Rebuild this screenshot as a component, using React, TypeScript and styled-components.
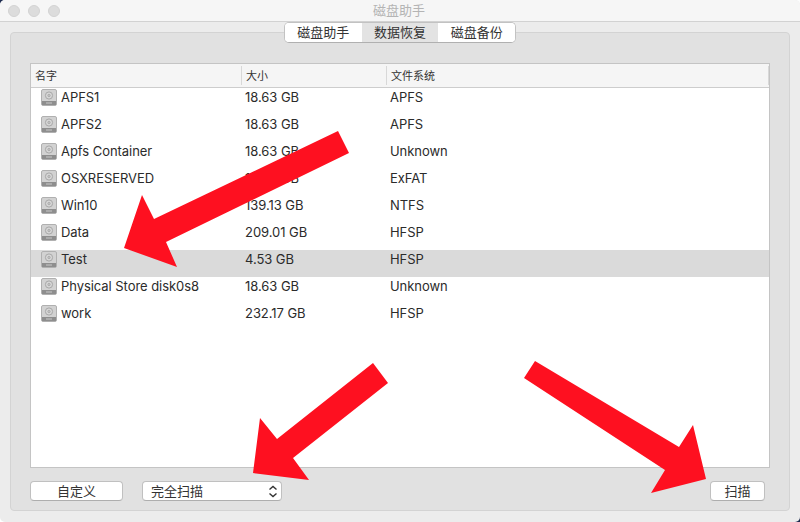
import styled, { createGlobalStyle } from "styled-components";

const rows = [
  { name: "APFS1", size: "18.63 GB", fs: "APFS" },
  { name: "APFS2", size: "18.63 GB", fs: "APFS" },
  { name: "Apfs Container", size: "18.63 GB", fs: "Unknown" },
  { name: "OSXRESERVED", size: "18.63 GB", fs: "ExFAT" },
  { name: "Win10", size: "139.13 GB", fs: "NTFS" },
  { name: "Data", size: "209.01 GB", fs: "HFSP" },
  { name: "Test", size: "4.53 GB", fs: "HFSP", selected: true },
  { name: "Physical Store disk0s8", size: "18.63 GB", fs: "Unknown" },
  { name: "work", size: "232.17 GB", fs: "HFSP" },
];

const arrows = [
  "338,131 349,153 166,242 177,267 124,248 142,195 154,219",
  "373,363 388,383 293,458 309,480 253,473 260,418 277,439",
  "535,361 524,378 665,470 651,493 706,479 693,425 679,447",
];

function DiskIcon() {
  return (
    <svg width="16" height="17" viewBox="0 0 16 17">
      <rect x="0.5" y="0.5" width="15" height="16" rx="1.5" fill="#d2d2d2" stroke="#b0b0b0" />
      <rect x="1" y="12" width="14" height="4" fill="#8e8e8e" />
      <circle cx="8" cy="6.5" r="3.6" fill="#d6d6d6" stroke="#a8a8a8" />
      <circle cx="8" cy="6.5" r="1.2" fill="#c4c4c4" stroke="#9c9c9c" strokeWidth="0.6" />
      <path d="M5 14h6" stroke="#c8c8c8" strokeWidth="1" />
    </svg>
  );
}

function App() {
  return (
    <Desktop>
      <GlobalStyle />
      <Window>
        <TitleBar>
          <Lights>
            <Light />
            <Light />
            <Light />
          </Lights>
          <Title>磁盘助手</Title>
        </TitleBar>
        <Body>
          <Tabs>
            <Tab>磁盘助手</Tab>
            <Tab $active>数据恢复</Tab>
            <Tab>磁盘备份</Tab>
          </Tabs>
          <Panel>
            <Table>
              <HeaderRow>
                <HeaderCell $width={211}>名字</HeaderCell>
                <HeaderCell $width={145}>大小</HeaderCell>
                <HeaderCell $width={382}>文件系统</HeaderCell>
              </HeaderRow>
              <div>
                {rows.map((row) => (
                  <Row key={row.name} $selected={row.selected}>
                    <NameCell>
                      <DiskIcon />
                      {row.name}
                    </NameCell>
                    <SizeCell>{row.size}</SizeCell>
                    <Cell>{row.fs}</Cell>
                  </Row>
                ))}
              </div>
            </Table>
            <Footer>
              <Button $width={93}>自定义</Button>
              <Select>
                完全扫描
                <svg width="10" height="13" viewBox="0 0 10 13" fill="none" stroke="#333" strokeWidth="1.4">
                  <path d="M1.5 4.5L5 1.5L8.5 4.5" />
                  <path d="M1.5 8.5L5 11.5L8.5 8.5" />
                </svg>
              </Select>
              <Spacer />
              <Button $width={55}>扫描</Button>
            </Footer>
          </Panel>
        </Body>
        <ArrowLayer width="800" height="522" viewBox="0 0 800 522">
          {arrows.map((points) => (
            <polygon key={points} points={points} fill="#fe1020" />
          ))}
        </ArrowLayer>
      </Window>
    </Desktop>
  );
}

const GlobalStyle = createGlobalStyle`
  html, body {
    margin: 0;
    padding: 0;
    background: #fff;
  }
`;

const Desktop = styled.div`
  width: 800px;
  height: 522px;
  overflow: hidden;
  background: linear-gradient(135deg, #1d2b4f 5px, #fff 5px, #fff 60%, #1d2b4f calc(100% - 5px));
`;

const Window = styled.div`
  position: relative;
  width: 800px;
  height: 522px;
  overflow: hidden;
  display: flex;
  flex-direction: column;
  background: #ececec;
  border-radius: 5px;
  font-family: "Inter", "Liberation Sans", "Noto Sans CJK SC", sans-serif;
  font-size: 13px;
  letter-spacing: -0.05px;
  color: #2b2b2b;
`;

const TitleBar = styled.div`
  position: relative;
  height: 21px;
  flex: none;
  display: flex;
  align-items: center;
  justify-content: center;
  background: #f6f6f6;
  border-bottom: 1px solid #d2d2d2;
`;

const Lights = styled.div`
  position: absolute;
  left: 8px;
  top: 5px;
  display: flex;
  gap: 8px;
`;

const Light = styled.span`
  width: 12px;
  height: 12px;
  border-radius: 50%;
  background: #dcdcdc;
  border: 1px solid #d2d2d2;
  box-sizing: border-box;
`;

const Title = styled.div`
  font-size: 13px;
  letter-spacing: 0;
  color: #b4b4b4;
  font-family: "Noto Sans CJK SC", sans-serif;
  padding: 0 2px 2px 0;
`;

const Body = styled.div`
  flex: 1;
  display: flex;
  flex-direction: column;
  padding: 0 10px 11px;
  min-height: 0;
`;

const Tabs = styled.div`
  position: relative;
  z-index: 1;
  align-self: center;
  display: flex;
  height: 21px;
  margin-bottom: -11px;
  box-sizing: border-box;
  border: 1px solid #c2c2c2;
  border-bottom-color: #b0b0b0;
  border-radius: 5px;
  overflow: hidden;
  background: #fff;
`;

const Tab = styled.div<{ $active?: boolean }>`
  width: 76.67px;
  display: flex;
  align-items: center;
  justify-content: center;
  padding-bottom: 2px;
  box-sizing: border-box;
  font-family: "Noto Sans CJK SC", sans-serif;
  font-size: 13px;
  letter-spacing: 0;
  color: #333;
  background: ${(p) => (p.$active ? "#e3e3e3" : "#fff")};
`;

const Panel = styled.div`
  flex: 1;
  display: flex;
  flex-direction: column;
  padding: 30px 19px 9px;
  background: #e1e1e1;
  border: 1px solid #d3d3d3;
  border-radius: 4px;
  min-height: 0;
`;

const Table = styled.div`
  flex: 1;
  display: flex;
  flex-direction: column;
  background: #fff;
  border: 1px solid #c4c4c4;
  min-height: 0;
`;

const HeaderRow = styled.div`
  display: flex;
  height: 23px;
  flex: none;
  background: #f5f5f5;
  border-bottom: 1px solid #cdcdcd;
`;

const HeaderCell = styled.div<{ $width: number }>`
  width: ${(p) => p.$width}px;
  box-sizing: border-box;
  padding: 0 0 2px 4px;
  display: flex;
  align-items: center;
  font-family: "Noto Sans CJK SC", sans-serif;
  font-size: 11px;
  letter-spacing: 0;
  color: #333;
  border-right: 1px solid #d8d8d8;
  margin: 2px 0;
`;

const Row = styled.div<{ $selected?: boolean }>`
  display: flex;
  align-items: center;
  height: 27px;
  box-sizing: border-box;
  padding-bottom: 9px;
  background: ${(p) => (p.$selected ? "#dadada" : "transparent")};
`;

const Cell = styled.div`
  flex: 1;
`;

const NameCell = styled.div`
  width: 214px;
  box-sizing: border-box;
  padding-left: 10px;
  display: flex;
  align-items: center;
  gap: 4px;

  svg {
    flex: none;
  }
`;

const SizeCell = styled.div`
  width: 145px;
`;

const Footer = styled.div`
  display: flex;
  align-items: center;
  height: 20px;
  flex: none;
  margin-top: 13px;
`;

const Spacer = styled.div`
  flex: 1;
`;

const Button = styled.div<{ $width: number }>`
  width: ${(p) => p.$width}px;
  height: 20px;
  box-sizing: border-box;
  display: flex;
  align-items: center;
  justify-content: center;
  padding-bottom: 2px;
  background: #fff;
  border: 1px solid #c0c0c0;
  border-bottom-color: #aeaeae;
  border-radius: 4px;
  font-family: "Noto Sans CJK SC", sans-serif;
  font-size: 13px;
  letter-spacing: 0;
  color: #333;
  margin-right: 5px;
`;

const Select = styled.div`
  width: 140px;
  height: 20px;
  margin-left: 14px;
  box-sizing: border-box;
  display: flex;
  align-items: center;
  justify-content: space-between;
  padding: 0 3px 0 8px;
  background: #fff;
  border: 1px solid #c0c0c0;
  border-bottom-color: #aeaeae;
  border-radius: 4px;
  font-family: "Noto Sans CJK SC", sans-serif;
  font-size: 13px;
  letter-spacing: 0;
  line-height: 16px;
  color: #333;
`;

const ArrowLayer = styled.svg`
  position: absolute;
  left: 0;
  top: 0;
  pointer-events: none;
`;

export default App;
